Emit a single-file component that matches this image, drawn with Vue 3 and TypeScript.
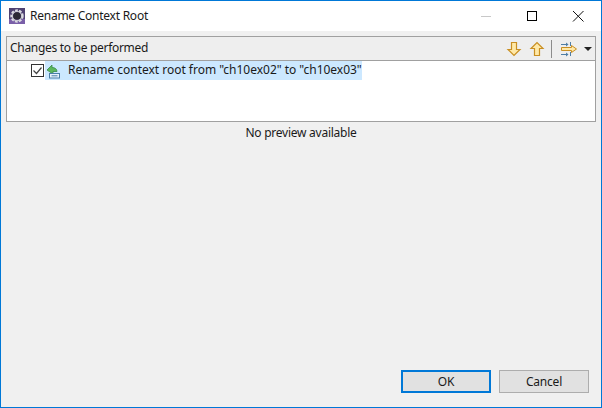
<template>
  <div class="dialog">
    <div class="titlebar">
      <svg class="app-icon" width="16" height="16" viewBox="0 0 16 16">
        <rect x="0" y="0" width="16" height="16" fill="#4f4272" />
        <rect x="0" y="11" width="16" height="5" fill="#7a5fa8" />
        <circle cx="8" cy="8" r="5.500" fill="none" stroke="#dcdce2" stroke-width="2.400" stroke-dasharray="2.600 1.300" />
        <circle cx="8" cy="8" r="4.600" fill="none" stroke="#c9c9d2" stroke-width="1.200" />
        <circle cx="8" cy="8" r="3.800" fill="#2a2833" />
      </svg>
      <span class="title">Rename Context Root</span>
      <div class="win-controls">
        <svg width="46" height="30" viewBox="0 0 46 30"><path d="M18 15.500h10" stroke="#c8c8c8" fill="none" /></svg>
        <svg width="46" height="30" viewBox="0 0 46 30"><rect x="18.500" y="10.500" width="9" height="9" fill="none" stroke="#000" /></svg>
        <svg width="46" height="30" viewBox="0 0 46 30"><path d="M18 10l10.500 10.500M28.500 10L18 20.500" stroke="#111" fill="none" /></svg>
      </div>
    </div>
    <div class="body">
      <section class="changes">
        <header class="changes-head">
          <span class="head-label">Changes to be performed</span>
          <div class="toolbar">
            <svg width="16" height="16" viewBox="0 0 16 16">
              <path d="M5.500 1.500h5v7h3.500L8 14.500 2 8.500h3.500z" fill="#ffe9a8" stroke="#c98f22" stroke-width="1.200" />
            </svg>
            <svg class="up" width="16" height="16" viewBox="0 0 16 16">
              <path d="M5.500 14.500h5v-7h3.500L8 1.500 2 7.500h3.500z" fill="#ffe9a8" stroke="#c98f22" stroke-width="1.200" />
            </svg>
            <span class="tool-sep"></span>
            <svg width="18" height="16" viewBox="0 0 18 16">
              <path d="M0 3.500h7M0 13.500h7" stroke="#4f7ea6" fill="none" />
              <path d="M5 1.500l2.500 2-2.500 2M5 11.500l2.500 2-2.500 2" fill="#4f7ea6" />
              <path d="M9.500 1v4M9.500 11v4" stroke="#4f7ea6" fill="none" />
              <path d="M0.500 6.500h10V4.500l5 3.500-5 3.500v-2h-10z" fill="#ffe9a8" stroke="#c98f22" />
            </svg>
            <span class="caret"></span>
          </div>
        </header>
        <div class="tree">
          <div class="tree-row">
            <span class="check">
              <svg width="13" height="13" viewBox="0 0 13 13"><path d="M2.500 6.500l3 3 5-6" fill="none" stroke="#444" stroke-width="1.200" /></svg>
            </span>
            <div class="selected">
              <svg width="16" height="16" viewBox="0 0 16 16">
                <path d="M2 7L7 2v2.500c3 0 5 1.500 5 4H8V11z" fill="#5cb85c" stroke="#3a8a4a" stroke-width="0.800" />
                <rect x="4.500" y="10.500" width="10" height="4.500" fill="#e8f2fb" stroke="#4a7fa8" />
                <path d="M6.500 12.800h6" stroke="#4a7fa8" />
              </svg>
              <span class="row-label">{{ changeLabel }}</span>
            </div>
          </div>
        </div>
      </section>
      <p class="no-preview">No preview available</p>
      <footer class="actions">
        <button class="btn btn-default">OK</button>
        <button class="btn">Cancel</button>
      </footer>
    </div>
  </div>
</template>

<script setup lang="ts">
const changeLabel = 'Rename context root from "ch10ex02" to "ch10ex03"'
</script>

<style>
html,
body {
  margin: 0;
  padding: 0;
}
</style>

<style scoped>
.dialog {
  box-sizing: border-box;
  width: 602px;
  height: 408px;
  border: 1px solid #0078d7;
  display: flex;
  flex-direction: column;
  background: #f0f0f0;
  font-family: "Noto Sans", "Open Sans", sans-serif;
  font-size: 12px;
  color: #1a1a1a;
}

.titlebar {
  height: 30px;
  background: #fff;
  display: flex;
  align-items: center;
  padding-left: 8px;
}

.app-icon {
  margin-right: 5px;
}

.title {
  flex: 1;
  letter-spacing: -0.25px;
  margin-bottom: 2px;
}

.win-controls {
  display: flex;
  height: 30px;
}

.body {
  flex: 1;
  display: flex;
  flex-direction: column;
  padding: 5px 5px 0;
  min-height: 0;
}

.changes {
  height: 86px;
  box-sizing: border-box;
  border: 1px solid #a0a0a0;
  background: #fff;
}

.changes-head {
  height: 24px;
  box-sizing: border-box;
  background: #eeeeee;
  border-bottom: 1px solid #a0a0a0;
  display: flex;
  align-items: center;
  justify-content: space-between;
  padding-left: 3px;
}

.head-label {
  letter-spacing: -0.3px;
  margin-bottom: 2px;
}

.toolbar {
  display: flex;
  align-items: center;
  padding-right: 3px;
}

.up {
  margin-left: 7px;
}

.tool-sep {
  width: 1px;
  height: 18px;
  background: #8c8c8c;
  margin: 0 9px 0 6px;
}

.caret {
  width: 0;
  height: 0;
  border-left: 4px solid transparent;
  border-right: 4px solid transparent;
  border-top: 4px solid #222;
  margin-left: 5px;
}

.tree-row {
  display: flex;
  align-items: center;
  height: 19px;
  padding-left: 24px;
}

.check {
  width: 13px;
  height: 13px;
  box-sizing: border-box;
  border: 1px solid #333;
  background: #fff;
  margin-right: 1px;
  display: flex;
  align-items: center;
  justify-content: center;
}

.check svg {
  flex: none;
}

.selected {
  display: flex;
  align-items: center;
  width: 317px;
  height: 19px;
  background: #cce8ff;
}

.row-label {
  margin-left: 7px;
  margin-bottom: 2px;
  white-space: nowrap;
  letter-spacing: -0.02px;
}

.no-preview {
  margin: 2px 0 0;
  text-align: center;
  line-height: 17px;
  letter-spacing: -0.25px;
}

.actions {
  margin-top: auto;
  display: flex;
  justify-content: flex-end;
  gap: 8px;
  padding: 0 7px 14px 0;
}

.btn {
  width: 90px;
  height: 23px;
  box-sizing: border-box;
  border: 1px solid #adadad;
  background: #e1e1e1;
  font: inherit;
  color: inherit;
  padding: 0;
  letter-spacing: -0.2px;
}

.btn-default {
  border: 2px solid #0078d7;
}
</style>
